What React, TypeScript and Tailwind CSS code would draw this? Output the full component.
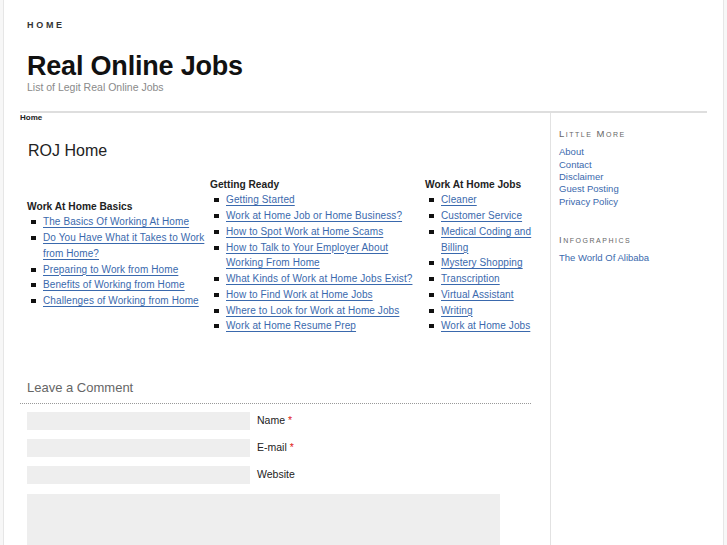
import type { ReactNode } from "react";

const basics = [
  "The Basics Of Working At Home",
  "Do You Have What it Takes to Work from Home?",
  "Preparing to Work from Home",
  "Benefits of Working from Home",
  "Challenges of Working from Home",
];

const ready = [
  "Getting Started",
  "Work at Home Job or Home Business?",
  "How to Spot Work at Home Scams",
  "How to Talk to Your Employer About Working From Home",
  "What Kinds of Work at Home Jobs Exist?",
  "How to Find Work at Home Jobs",
  "Where to Look for Work at Home Jobs",
  "Work at Home Resume Prep",
];

const jobs = [
  "Cleaner",
  "Customer Service",
  "Medical Coding and Billing",
  "Mystery Shopping",
  "Transcription",
  "Virtual Assistant",
  "Writing",
  "Work at Home Jobs",
];

const littleMore = ["About", "Contact", "Disclaimer", "Guest Posting", "Privacy Policy"];

function LinkList({ title, items }: { title: string; items: string[] }) {
  return (
    <div>
      <h3 className="text-[10.2px] font-bold leading-[15px] text-[#222]">{title}</h3>
      <ul>
        {items.map((item) => (
          <li key={item} className="flex items-start text-[10px] leading-[15.75px]">
            <span className="mt-[6px] ml-[4px] mr-[7px] h-[4px] w-[5px] shrink-0 bg-[#111]" />
            <a href="#" className="tracking-[0.1px] text-[#3a69ad] underline decoration-[#3a69ad] underline-offset-[2px]">
              {item}
            </a>
          </li>
        ))}
      </ul>
    </div>
  );
}

function SideHeading({ children }: { children: ReactNode }) {
  return (
    <h4 className="text-[9.5px] leading-[12px] tracking-[0.16em] text-[#666] [font-variant:small-caps]">
      {children}
    </h4>
  );
}

function Field({ label, required }: { label: string; required?: boolean }) {
  return (
    <div className="flex items-center gap-[7px]">
      <div className="h-[18px] w-[223px] bg-[#eeeeee]" />
      <span className="text-[10.5px] text-[#222]">
        {label}
        {required && <span className="ml-[3px] text-[#e02020]">*</span>}
      </span>
    </div>
  );
}

export default function App() {
  return (
    <div className="flex min-h-[545px] w-full bg-white font-['Liberation_Sans',Arial,sans-serif]">
      <div className="w-[4px] shrink-0 border-r border-[#e6e6e6] bg-[#f7f7f7]" />
      <div className="flex-1">
        <header className="pl-[23px] pt-[19px]">
          <div className="text-[9px] font-bold tracking-[0.3em] text-[#333]">HOME</div>
          <h1 className="mt-[17px] text-[27px] font-semibold leading-[32px] tracking-[-0.2px] text-[#111]">
            Real Online Jobs
          </h1>
          <p className="mt-[-2px] text-[10.5px] text-[#8a8a8a]">List of Legit Real Online Jobs</p>
        </header>

        <div className="ml-[16px] mt-[16px] flex w-[687px] border-t-2 border-[#dedede]">
          <main className="w-[530px] shrink-0">
            <div className="text-[8px] font-bold leading-[9px] text-[#222]">Home</div>
            <h2 className="ml-[8px] mt-[19px] text-[16px] leading-[20px] text-[#222]">ROJ Home</h2>

            <div className="ml-[7px] mt-[16px] flex">
              <div className="mt-[22px] w-[183px] shrink-0">
                <LinkList title="Work At Home Basics" items={basics} />
              </div>
              <div className="w-[215px] shrink-0">
                <LinkList title="Getting Ready" items={ready} />
              </div>
              <div className="w-[110px] shrink-0">
                <LinkList title="Work At Home Jobs" items={jobs} />
              </div>
            </div>

            <h3 className="ml-[7px] mt-[46px] text-[13px] leading-[15px] text-[#666]">Leave a Comment</h3>
            <div className="mt-[8px] w-[511px] border-t border-dotted border-[#999]" />
            <div className="ml-[7px] mt-[8px] flex flex-col gap-[9px]">
              <Field label="Name" required />
              <Field label="E-mail" required />
              <Field label="Website" />
              <div className="mt-[1px] h-[60px] w-[473px] bg-[#eeeeee]" />
            </div>
          </main>

          <aside className="flex-1 border-l border-[#e2e2e2] pl-[8px] pt-[15px]">
            <SideHeading>Little More</SideHeading>
            <ul className="mt-[6px]">
              {littleMore.map((l) => (
                <li key={l} className="text-[9.5px] leading-[12.4px]">
                  <a href="#" className="text-[#3a69ad]">{l}</a>
                </li>
              ))}
            </ul>
            <div className="mt-[26px]">
              <SideHeading>Infographics</SideHeading>
            </div>
            <div className="mt-[6px] text-[9.5px] leading-[12.4px]">
              <a href="#" className="text-[#3a69ad]">The World Of Alibaba</a>
            </div>
          </aside>
        </div>
      </div>
      <div className="w-[4px] shrink-0 border-l border-[#e6e6e6] bg-[#f7f7f7]" />
    </div>
  );
}
